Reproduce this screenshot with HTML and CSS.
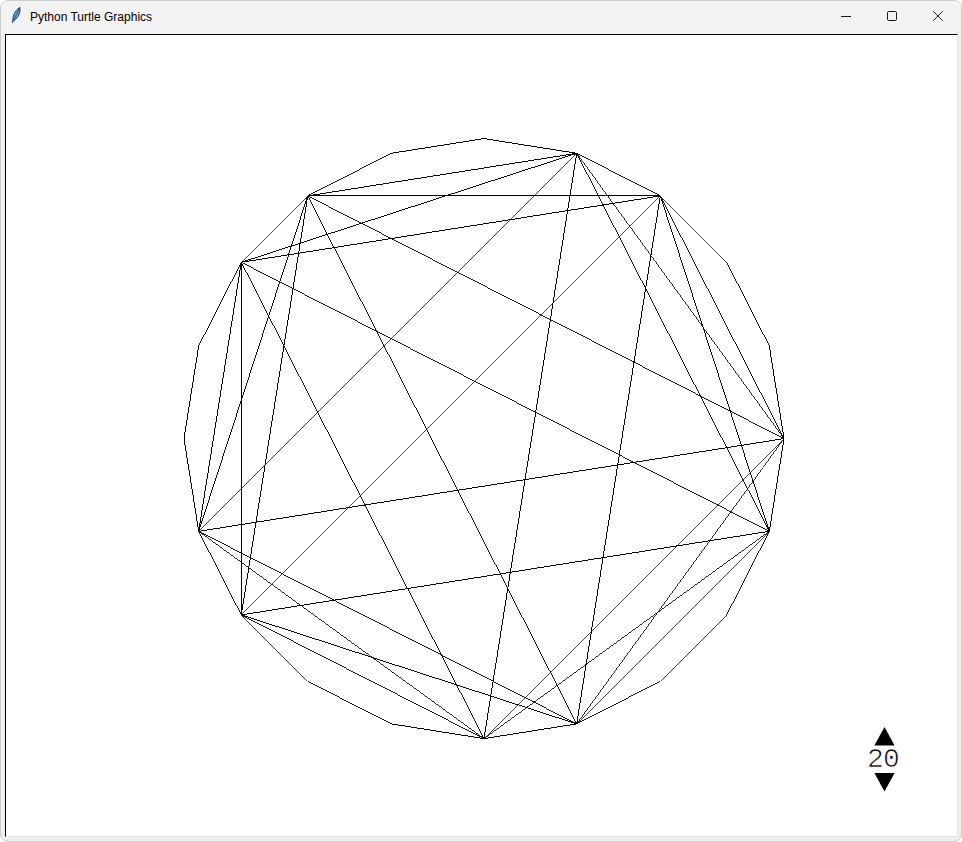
FILE: index.html
```html
<!DOCTYPE html>
<html>
<head>
<meta charset="utf-8">
<title>Python Turtle Graphics</title>
<link rel="stylesheet" href="styles.css">
</head>
<body>
<div class="window">
  <div class="titlebar">
    <svg class="app-icon" viewBox="0 0 16 16" width="16" height="16">
      <path d="M5 14 C4.4 9 7 3.4 11.8 0.5 C12.8 5 10.3 11 5.6 13.7 Z" fill="#6fa8e0" stroke="#16335f" stroke-width="1"/>
      <path d="M11.2 1.8 L5.4 13.4" stroke="#16335f" stroke-width="0.8" fill="none"/>
      <path d="M5 13.8 L4.2 15.6" stroke="#16335f" stroke-width="1.1" fill="none"/>
    </svg>
    <span class="title">Python Turtle Graphics</span>
    <div class="caption">
      <div class="cap-btn">
        <svg viewBox="0 0 10 10" width="10" height="10"><path d="M0 5.5 H10" stroke="#1a1a1a" stroke-width="1"/></svg>
      </div>
      <div class="cap-btn">
        <svg viewBox="0 0 10 10" width="10" height="10"><rect x="0.5" y="0.5" width="9" height="9" rx="1.2" fill="none" stroke="#1a1a1a" stroke-width="1"/></svg>
      </div>
      <div class="cap-btn">
        <svg viewBox="0 0 10 10" width="10" height="10"><path d="M0.3 0.3 L9.7 9.7 M9.7 0.3 L0.3 9.7" stroke="#1a1a1a" stroke-width="1"/></svg>
      </div>
    </div>
  </div>
  <div class="client">
    <div class="canvas">
      <svg class="drawing" viewBox="6 35 951 801" width="951" height="801">
        <g class="ink">
          <!-- polygon edges -->
          <line class="s99" x1="484" y1="138.6" x2="576.7" y2="153.3"/>
          <line class="s89" x1="576.7" y1="153.3" x2="660.3" y2="195.9"/>
          <line class="s71" x1="660.3" y1="195.9" x2="726.7" y2="262.3"/>
          <line class="s89" x1="726.7" y1="262.3" x2="769.3" y2="345.9"/>
          <line class="s99" x1="769.3" y1="345.9" x2="784" y2="438.6"/>
          <line class="s99" x1="784" y1="438.6" x2="769.3" y2="531.3"/>
          <line class="s89" x1="769.3" y1="531.3" x2="726.7" y2="614.9"/>
          <line class="s71" x1="726.7" y1="614.9" x2="660.3" y2="681.3"/>
          <line class="s89" x1="660.3" y1="681.3" x2="576.7" y2="723.9"/>
          <line class="s99" x1="576.7" y1="723.9" x2="484" y2="738.6"/>
          <line class="s99" x1="484" y1="738.6" x2="391.3" y2="723.9"/>
          <line class="s89" x1="391.3" y1="723.9" x2="307.7" y2="681.3"/>
          <line class="s71" x1="307.7" y1="681.3" x2="241.3" y2="614.9"/>
          <line class="s89" x1="241.3" y1="614.9" x2="198.7" y2="531.3"/>
          <line class="s99" x1="198.7" y1="531.3" x2="184" y2="438.6"/>
          <line class="s99" x1="184" y1="438.6" x2="198.7" y2="345.9"/>
          <line class="s89" x1="198.7" y1="345.9" x2="241.3" y2="262.3"/>
          <line class="s71" x1="241.3" y1="262.3" x2="307.7" y2="195.9"/>
          <line class="s89" x1="307.7" y1="195.9" x2="391.3" y2="153.3"/>
          <line class="s99" x1="391.3" y1="153.3" x2="484" y2="138.6"/>
          <!-- chords -->
          <line class="s81" x1="576.7" y1="153.3" x2="784" y2="438.6"/>
          <line class="s89" x1="576.7" y1="153.3" x2="769.3" y2="531.3"/>
          <line class="s99" x1="576.7" y1="153.3" x2="484" y2="738.6"/>
          <line class="s71" x1="576.7" y1="153.3" x2="198.7" y2="531.3"/>
          <line class="s95" x1="576.7" y1="153.3" x2="241.3" y2="262.3"/>
          <line class="s99" x1="576.7" y1="153.3" x2="307.7" y2="195.9"/>
          <line class="s89" x1="660.3" y1="195.9" x2="784" y2="438.6"/>
          <line class="s95" x1="660.3" y1="195.9" x2="769.3" y2="531.3"/>
          <line class="s99" x1="660.3" y1="195.9" x2="576.7" y2="723.9"/>
          <line class="s71" x1="660.3" y1="195.9" x2="241.3" y2="614.9"/>
          <line class="s99" x1="660.3" y1="195.9" x2="241.3" y2="262.3"/>
          <line class="s100" x1="660.3" y1="195.9" x2="307.7" y2="195.9"/>
          <line class="s81" x1="784" y1="438.6" x2="576.7" y2="723.9"/>
          <line class="s71" x1="784" y1="438.6" x2="484" y2="738.6"/>
          <line class="s99" x1="784" y1="438.6" x2="198.7" y2="531.3"/>
          <line class="s89" x1="784" y1="438.6" x2="307.7" y2="195.9"/>
          <line class="s71" x1="769.3" y1="531.3" x2="576.7" y2="723.9"/>
          <line class="s81" x1="769.3" y1="531.3" x2="484" y2="738.6"/>
          <line class="s99" x1="769.3" y1="531.3" x2="241.3" y2="614.9"/>
          <line class="s89" x1="769.3" y1="531.3" x2="241.3" y2="262.3"/>
          <line class="s95" x1="576.7" y1="723.9" x2="241.3" y2="614.9"/>
          <line class="s89" x1="576.7" y1="723.9" x2="198.7" y2="531.3"/>
          <line class="s89" x1="576.7" y1="723.9" x2="307.7" y2="195.9"/>
          <line class="s89" x1="484" y1="738.6" x2="241.3" y2="614.9"/>
          <line class="s81" x1="484" y1="738.6" x2="198.7" y2="531.3"/>
          <line class="s89" x1="484" y1="738.6" x2="241.3" y2="262.3"/>
          <line class="s100" x1="241.3" y1="614.9" x2="241.3" y2="262.3"/>
          <line class="s99" x1="241.3" y1="614.9" x2="307.7" y2="195.9"/>
          <line class="s99" x1="198.7" y1="531.3" x2="241.3" y2="262.3"/>
          <line class="s95" x1="198.7" y1="531.3" x2="307.7" y2="195.9"/>
        </g>
        <g class="arrows">
          <polygon points="884.5,727 894.6,745.6 874.4,745.6"/>
          <polygon points="874.4,773 894.6,773 884.5,791.5"/>
        </g>
        <text class="count" x="867 883" y="767">20</text>
      </svg>
    </div>
  </div>
</div>
</body>
</html>
```

FILE: styles.css
```css
html, body {
  margin: 0;
  padding: 0;
  background: #ffffff;
  overflow: hidden;
}

.window {
  width: 962px;
  height: 842px;
  box-sizing: border-box;
  border: 1px solid #cbcbcb;
  border-radius: 8px;
  background: #f0f0f0;
  overflow: hidden;
  display: flex;
  flex-direction: column;
}

.titlebar {
  height: 33px;
  flex: none;
  display: flex;
  align-items: flex-start;
  background: #f3f3f3;
}

.app-icon {
  display: block;
  margin-top: 6px;
  margin-left: 7px;
  margin-right: 6px;
  flex: none;
}

.title {
  margin-top: 7.5px;
  font-family: "Liberation Sans", Arial, sans-serif;
  font-size: 12px;
  line-height: 16px;
  color: #000000;
  white-space: nowrap;
}

.caption {
  margin-left: auto;
  display: flex;
  height: 29px;
}

.cap-btn {
  width: 46px;
  height: 29px;
  display: flex;
  align-items: center;
  justify-content: center;
}

.cap-btn svg {
  display: block;
}

.client {
  flex: 1;
  display: flex;
  align-items: flex-start;
  padding-left: 4px;
}

.canvas {
  width: 953px;
  height: 803px;
  box-sizing: border-box;
  border-style: solid;
  border-width: 1px;
  border-color: #000000 #e4e4e4 #e4e4e4 #000000;
  background: #ffffff;
}

.drawing {
  display: block;
}

/* aliased 1px lines, like the Tk canvas: the stroke is sized so that it
   covers about one pixel across its minor axis */
.ink {
  shape-rendering: crispEdges;
  fill: none;
  stroke: #000000;
}

.s100 { stroke-width: 1px; }
.s99  { stroke-width: 0.995px; }
.s95  { stroke-width: 0.965px; }
.s89  { stroke-width: 0.905px; }
.s81  { stroke-width: 0.825px; }
.s71  { stroke-width: 0.725px; }

.arrows {
  fill: #000000;
}

.count {
  font-family: "Liberation Mono", "Courier New", monospace;
  font-size: 28px;
  fill: #000000;
  stroke: #ffffff;
  stroke-width: 0.7px;
}
```
